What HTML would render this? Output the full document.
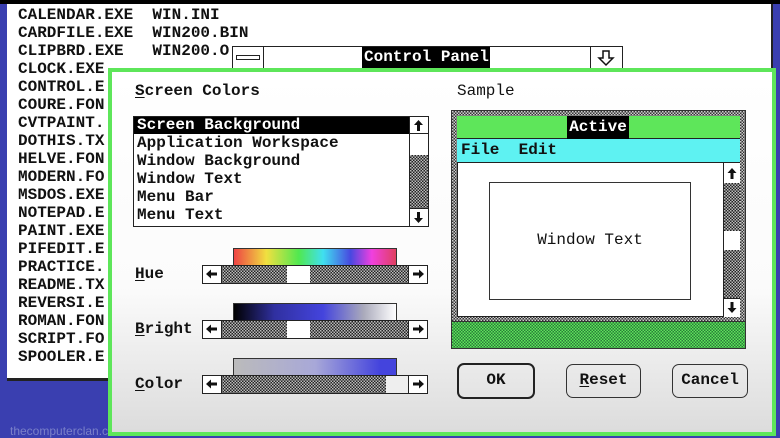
<!DOCTYPE html>
<html><head><style>
*{margin:0;padding:0;box-sizing:border-box}
body{width:780px;height:438px;overflow:hidden;background:#3a3fb0;position:relative;font-family:"Liberation Mono",monospace;font-weight:bold;font-size:16px;color:#111}
.a{position:absolute}
.t{position:absolute;white-space:pre;line-height:18px}
.bx{border:1.5px solid #222;background:#fff}
.dith{background:repeating-conic-gradient(#222 0 25%,#bbb 0 50%) 0 0/3px 3px !important}
u{text-decoration:underline;text-underline-offset:2px}
svg{position:absolute;left:0;top:0}
.ar{display:block;margin:auto}
</style></head><body>
<div class="a" style="left:0;top:0;width:780px;height:4px;background:#000"></div>
<div class="a" style="left:7px;top:4px;width:766px;height:375px;background:#fff;border-right:2px solid #222"></div>
<div class="t" style="left:18px;top:6px">CALENDAR.EXE  WIN.INI
CARDFILE.EXE  WIN200.BIN
CLIPBRD.EXE   WIN200.O
CLOCK.EXE
CONTROL.E
COURE.FON
CVTPAINT.
DOTHIS.TX
HELVE.FON
MODERN.FO
MSDOS.EXE
NOTEPAD.E
PAINT.EXE
PIFEDIT.E
PRACTICE.
README.TX
REVERSI.E
ROMAN.FON
SCRIPT.FO
SPOOLER.E</div>
<div class="a" style="left:7px;top:378px;width:102px;height:3px;background:#222"></div>
<div class="a" style="left:10px;top:424px;font:12px 'Liberation Sans',sans-serif;color:#7a80c8">thecomputerclan.com</div>
<!-- control panel title -->
<div class="a" style="left:232px;top:46px;width:391px;height:23px;border:1.5px solid #222;background:#fff"></div>
<div class="a" style="left:232px;top:46px;width:32px;height:23px;border:1.5px solid #222"></div>
<div class="a" style="left:236px;top:55px;width:24px;height:5px;border:1.5px solid #222"></div>
<div class="a" style="left:362px;top:47px;width:128px;height:21px;background:#000;color:#fff;line-height:21px;padding-left:2px">Control Panel</div>
<div class="a" style="left:590px;top:46px;width:33px;height:23px;border:1.5px solid #222"><svg width="30" height="20"><path d="M12 4h6v7h4l-7 7-7-7h4z" fill="none" stroke="#111" stroke-width="1.5"/></svg></div>
<!-- dialog -->
<div class="a" style="left:108px;top:68px;width:668px;height:368px;border:4px solid #5ee65a;background:linear-gradient(#fff 0%,#fbfbfb 60%,#dcdcdc 100%)"></div>
<div class="t" style="left:135px;top:82px"><u>S</u>creen Colors</div>
<div class="t" style="left:457px;top:82px;font-weight:normal">Sample</div>
<div class="a bx" style="left:133px;top:116px;width:296px;height:111px"></div>
<div class="a" style="left:134px;top:117px;width:276px;height:17px;background:#000"></div>
<div class="t" style="left:137px;top:116px;color:#fff">Screen Background</div>
<div class="t" style="left:137px;top:134px">Application Workspace
Window Background
Window Text
Menu Bar
Menu Text</div>
<div class="a" style="left:409px;top:116px;width:20px;height:111px;border:1.5px solid #222;background:#fff"></div>
<div class="a dith" style="left:410px;top:155px;width:18px;height:53px"></div>
<div class="a bx" style="left:409px;top:116px;width:20px;height:18px"><svg width="18" height="16"><path d="M8.5 3l-4.5 5h3v6h3v-6h3z" fill="#111"/></svg></div>
<div class="a bx" style="left:409px;top:208px;width:20px;height:19px"><svg width="18" height="16"><path d="M8.5 14l-4.5-5h3v-6h3v6h3z" fill="#111"/></svg></div>
<!-- sliders -->
<div class="a" style="left:233px;top:248px;width:164px;height:18px;border:1.5px solid #333;background:linear-gradient(90deg,#ee4444,#f0e040 20%,#50e850 40%,#40e0f0 55%,#4848e0 72%,#f040e0 85%,#e04060)"></div>
<div class="a" style="left:233px;top:303px;width:164px;height:18px;border:1.5px solid #333;background:linear-gradient(90deg,#000,#3030a0 25%,#4444dd 55%,#aab 80%,#fff)"></div>
<div class="a" style="left:233px;top:358px;width:164px;height:18px;border:1.5px solid #333;background:linear-gradient(90deg,#bbb,#a8a8d8 50%,#4444dd 90%)"></div>
<div class="t" style="left:135px;top:265px"><u>H</u>ue</div>
<div class="t" style="left:135px;top:320px"><u>B</u>right</div>
<div class="t" style="left:135px;top:375px"><u>C</u>olor</div>
<div class="a dith" style="left:202px;top:265px;width:226px;height:19px;border:1.5px solid #222"></div>
<div class="a" style="left:287px;top:266px;width:23px;height:17px;background:#fff"></div>
<div class="a dith" style="left:202px;top:320px;width:226px;height:19px;border:1.5px solid #222"></div>
<div class="a" style="left:287px;top:321px;width:23px;height:17px;background:#fff"></div>
<div class="a dith" style="left:202px;top:375px;width:226px;height:19px;border:1.5px solid #222"></div>
<div class="a" style="left:386px;top:376px;width:23px;height:17px;background:#eee"></div>
<div class="a bx" style="left:202px;top:265px;width:20px;height:19px"><svg width="18" height="16"><path d="M3 8l5-4.5v3h6v3h-6v3z" fill="#111"/></svg></div>
<div class="a bx" style="left:408px;top:265px;width:20px;height:19px"><svg width="18" height="16"><path d="M15 8l-5-4.5v3h-6v3h6v3z" fill="#111"/></svg></div>
<div class="a bx" style="left:202px;top:320px;width:20px;height:19px"><svg width="18" height="16"><path d="M3 8l5-4.5v3h6v3h-6v3z" fill="#111"/></svg></div>
<div class="a bx" style="left:408px;top:320px;width:20px;height:19px"><svg width="18" height="16"><path d="M15 8l-5-4.5v3h-6v3h6v3z" fill="#111"/></svg></div>
<div class="a bx" style="left:202px;top:375px;width:20px;height:19px"><svg width="18" height="16"><path d="M3 8l5-4.5v3h6v3h-6v3z" fill="#111"/></svg></div>
<div class="a bx" style="left:408px;top:375px;width:20px;height:19px"><svg width="18" height="16"><path d="M15 8l-5-4.5v3h-6v3h6v3z" fill="#111"/></svg></div>
<!-- sample -->
<div class="a" style="left:451px;top:110px;width:295px;height:212px;border:1px solid #333;background:repeating-conic-gradient(#333 0 25%,#ccc 0 50%) 0 0/3px 3px"></div>
<div class="a" style="left:451px;top:321px;width:295px;height:28px;border:1px solid #333;background:repeating-conic-gradient(#2a7a3a 0 25%,#5ee65a 0 50%) 0 0/3px 3px"></div>
<div class="a" style="left:457px;top:116px;width:283px;height:201px;background:#fff;border:1px solid #222"></div>
<div class="a" style="left:457px;top:116px;width:283px;height:23px;background:#5ee65a;border-bottom:1px solid #222"></div>
<div class="a" style="left:567px;top:116px;width:62px;height:23px;background:#000;color:#fff;text-align:center;line-height:22px">Active</div>
<div class="a" style="left:457px;top:139px;width:283px;height:24px;background:#5ef2f2;border-bottom:1.5px solid #222;line-height:23px;padding-left:4px;white-space:pre">File  Edit</div>
<div class="a" style="left:723px;top:163px;width:17px;height:154px;border-left:1.5px solid #222;background:#fff"></div>
<div class="a dith" style="left:724px;top:183px;width:16px;height:48px"></div>
<div class="a dith" style="left:724px;top:250px;width:16px;height:48px"></div>
<div class="a" style="left:724px;top:164px;width:16px;height:19px"><svg width="16" height="18"><path d="M8 4l-4.5 5h3v6h3v-6h3z" fill="#111"/></svg></div>
<div class="a" style="left:724px;top:298px;width:16px;height:19px;border-top:1px solid #222;background:#fff"><svg width="16" height="18"><path d="M8 14l-4.5-5h3v-6h3v6h3z" fill="#111"/></svg></div>
<div class="a" style="left:489px;top:182px;width:202px;height:118px;border:1.5px solid #333;text-align:center;line-height:114px;font-weight:normal">Window Text</div>
<!-- buttons -->
<div class="a" style="left:457px;top:363px;width:78px;height:36px;border:2.5px solid #222;border-radius:7px;text-align:center;line-height:31px">OK</div>
<div class="a" style="left:566px;top:364px;width:75px;height:34px;border:1.5px solid #333;border-radius:7px;text-align:center;line-height:31px"><u>R</u>eset</div>
<div class="a" style="left:672px;top:364px;width:76px;height:34px;border:1.5px solid #333;border-radius:7px;text-align:center;line-height:31px">Cancel</div>
</body></html>
